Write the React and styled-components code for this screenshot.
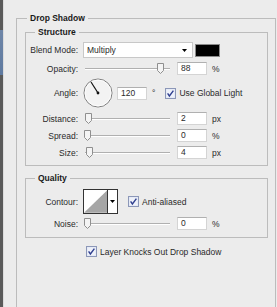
import styled, { createGlobalStyle } from "styled-components";

const Global = createGlobalStyle`
  html, body { margin: 0; padding: 0; background: #ececec; overflow: hidden; }
  body { font-family: "Liberation Sans", Arial, sans-serif; font-size: 8.5px; color: #2a2a2a; }
`;

const Page = styled.div`
  width: 277px;
  height: 307px;
  display: flex;
  background: #ececec;
  overflow: hidden;
`;
const LeftStrip = styled.div`
  width: 3px;
  flex: none;
  background: linear-gradient(to bottom, #5a5a5a 0, #5a5a5a 30px, #6f86a8 30px, #5f7aa0 75px, #5a5a5a 75px);
  border-right: 1px solid #dcdcdc;
`;
const Group = styled.fieldset`
  margin: ${p => p.$m || 0};
  padding: ${p => p.$pad || 0};
  border: 1px solid #bcbcbc;
  min-inline-size: 0;
  box-sizing: border-box;
  width: ${p => p.$w}px;
  height: ${p => p.$h ? `${p.$h}px` : "auto"};
  display: flex;
  flex-direction: column;
  flex: none;
`;
const Legend = styled.legend`
  font-weight: 700;
  line-height: 11px;
  padding: 0 3px;
  margin-left: ${p => p.$ml}px;
  color: #1a1a1a;
`;
const Rows = styled.div`
  display: flex;
  flex-direction: column;
  gap: ${p => p.$gap}px;
  padding: ${p => p.$pad};
`;
const Row = styled.div`
  display: flex;
  align-items: center;
  height: ${p => p.$h}px;
  margin-top: ${p => p.$mt || 0}px;
`;
const Label = styled.span`
  width: 52px;
  text-align: right;
  margin-right: 5px;
  flex: none;
  white-space: nowrap;
`;
const Select = styled.div`
  width: 110px;
  height: 16px;
  box-sizing: border-box;
  background: #fff;
  border: 1px solid #c8c8c8;
  display: flex;
  align-items: center;
  justify-content: space-between;
  padding: 0 5px 0 3px;
`;
const Swatch = styled.div`
  width: 25px;
  height: 13px;
  margin-left: 2px;
  background: #000;
  border: 1px solid #8a8a8a;
  box-sizing: border-box;
`;
const Slider = styled.div`
  position: relative;
  width: 89px;
  height: 13px;
  flex: none;
  &::before {
    content: "";
    position: absolute;
    left: 2px;
    right: 2px;
    top: 6px;
    height: 1px;
    background: #b0b0b0;
    box-shadow: 0 1px 0 #fff;
  }
`;
const Thumb = styled.svg`
  position: absolute;
  top: 1px;
  left: ${p => p.$pos - 3.5}px;
`;
const Input = styled.div`
  width: 30px;
  height: 13px;
  box-sizing: border-box;
  background: #fff;
  border: 1px solid #d4d4d4;
  border-top-color: #b0b0b0;
  padding-left: 3px;
  line-height: 11px;
  margin-left: ${p => p.$ml}px;
  flex: none;
`;
const Unit = styled.span`
  margin-left: ${p => p.$ml || 5}px;
`;
const Check = styled.label`
  display: flex;
  align-items: center;
  gap: 3px;
  margin-left: ${p => p.$ml}px;
  white-space: nowrap;
`;
const Box = styled.svg`
  flex: none;
`;
const ContourBox = styled.div`
  width: 35px;
  height: 25px;
  box-sizing: border-box;
  border: 1px solid #333;
  display: flex;
  background: #fff;
`;
const ContourDrop = styled.div`
  width: 9px;
  border-left: 1px solid #333;
  display: flex;
  align-items: center;
  justify-content: center;
`;
const Dial = styled.svg`
  flex: none;
`;
const Bottom = styled.div`
  padding: 8px 0 0 61px;
`;

const Arrow = () => (
  <svg width="5" height="3" viewBox="0 0 5 3"><path d="M0 0h5L2.5 3z" fill="#000" /></svg>
);

const CheckBox = () => (
  <Box width="11" height="11" viewBox="0 0 11 11">
    <rect x="0.5" y="0.5" width="10" height="10" fill="#dfe4f2" stroke="#8c97b8" />
    <rect x="1.5" y="1.5" width="8" height="8" fill="#eef1fa" />
    <path d="M2.6 5.4 L4.4 8 L8.4 2.6" fill="none" stroke="#2f3f8f" strokeWidth="1.4" />
  </Box>
);

const SliderCtl = ({ pos }) => (
  <Slider>
    <Thumb $pos={pos} width="7" height="11" viewBox="0 0 7 11">
      <path d="M0.5 0.5h6v7l-3 3l-3-3z" fill="#f4f4f4" stroke="#8f8f8f" />
    </Thumb>
  </Slider>
);

const SliderRow = ({ label, pos, value, unit }) => (
  <Row $h={13}>
    <Label>{label}</Label>
    <SliderCtl pos={pos} />
    <Input $ml={5}>{value}</Input>
    <Unit>{unit}</Unit>
  </Row>
);

export default function App() {
  return (
    <Page>
      <Global />
      <LeftStrip />
      <Group $m="13px 0 0 12px" $pad="0 7px 0 8px" $w={260} $h={320}>
        <Legend $ml={2}>Drop Shadow</Legend>
        <Group $m="3px 0 0 0" $w={243}>
          <Legend $ml={9}>Structure</Legend>
          <Rows $gap={4} $pad="4px 0 6px 0">
            <Row $h={16}>
              <Label>Blend Mode:</Label>
              <Select>
                <span>Multiply</span>
                <Arrow />
              </Select>
              <Swatch />
            </Row>
            <SliderRow label="Opacity:" pos={77} value="88" unit="%" />
            <Row $h={30} $mt={-1}>
              <Label>Angle:</Label>
              <Dial width="30" height="30" viewBox="0 0 30 30">
                <circle cx="15" cy="15" r="14" fill="#f3f3f3" stroke="#7d7d7d" />
                <circle cx="15" cy="15" r="13" fill="none" stroke="#fff" strokeWidth="0.8" />
                <line x1="15" y1="15" x2="8" y2="4" stroke="#111" strokeWidth="1.2" />
                <circle cx="15" cy="15" r="1.4" fill="#111" />
              </Dial>
              <Input $ml={4}>120</Input>
              <Unit>°</Unit>
              <Check $ml={10}>
                <CheckBox />
                <span>Use Global Light</span>
              </Check>
            </Row>
            <SliderRow label="Distance:" pos={5} value="2" unit="px" />
            <SliderRow label="Spread:" pos={4} value="0" unit="%" />
            <SliderRow label="Size:" pos={6} value="4" unit="px" />
          </Rows>
        </Group>
        <Group $m="7px 0 0 0" $w={243}>
          <Legend $ml={9}>Quality</Legend>
          <Rows $gap={3} $pad="5px 0 7px 0">
            <Row $h={25}>
              <Label>Contour:</Label>
              <ContourBox>
                <svg width="24" height="23" viewBox="0 0 24 23">
                  <path d="M0 23L24 0V23z" fill="#a6a6a6" />
                </svg>
                <ContourDrop><Arrow /></ContourDrop>
              </ContourBox>
              <Check $ml={10}>
                <CheckBox />
                <span>Anti-aliased</span>
              </Check>
            </Row>
            <SliderRow label="Noise:" pos={4} value="0" unit="%" />
          </Rows>
        </Group>
        <Bottom>
          <Check $ml={0}>
            <CheckBox />
            <span>Layer Knocks Out Drop Shadow</span>
          </Check>
        </Bottom>
      </Group>
    </Page>
  );
}
